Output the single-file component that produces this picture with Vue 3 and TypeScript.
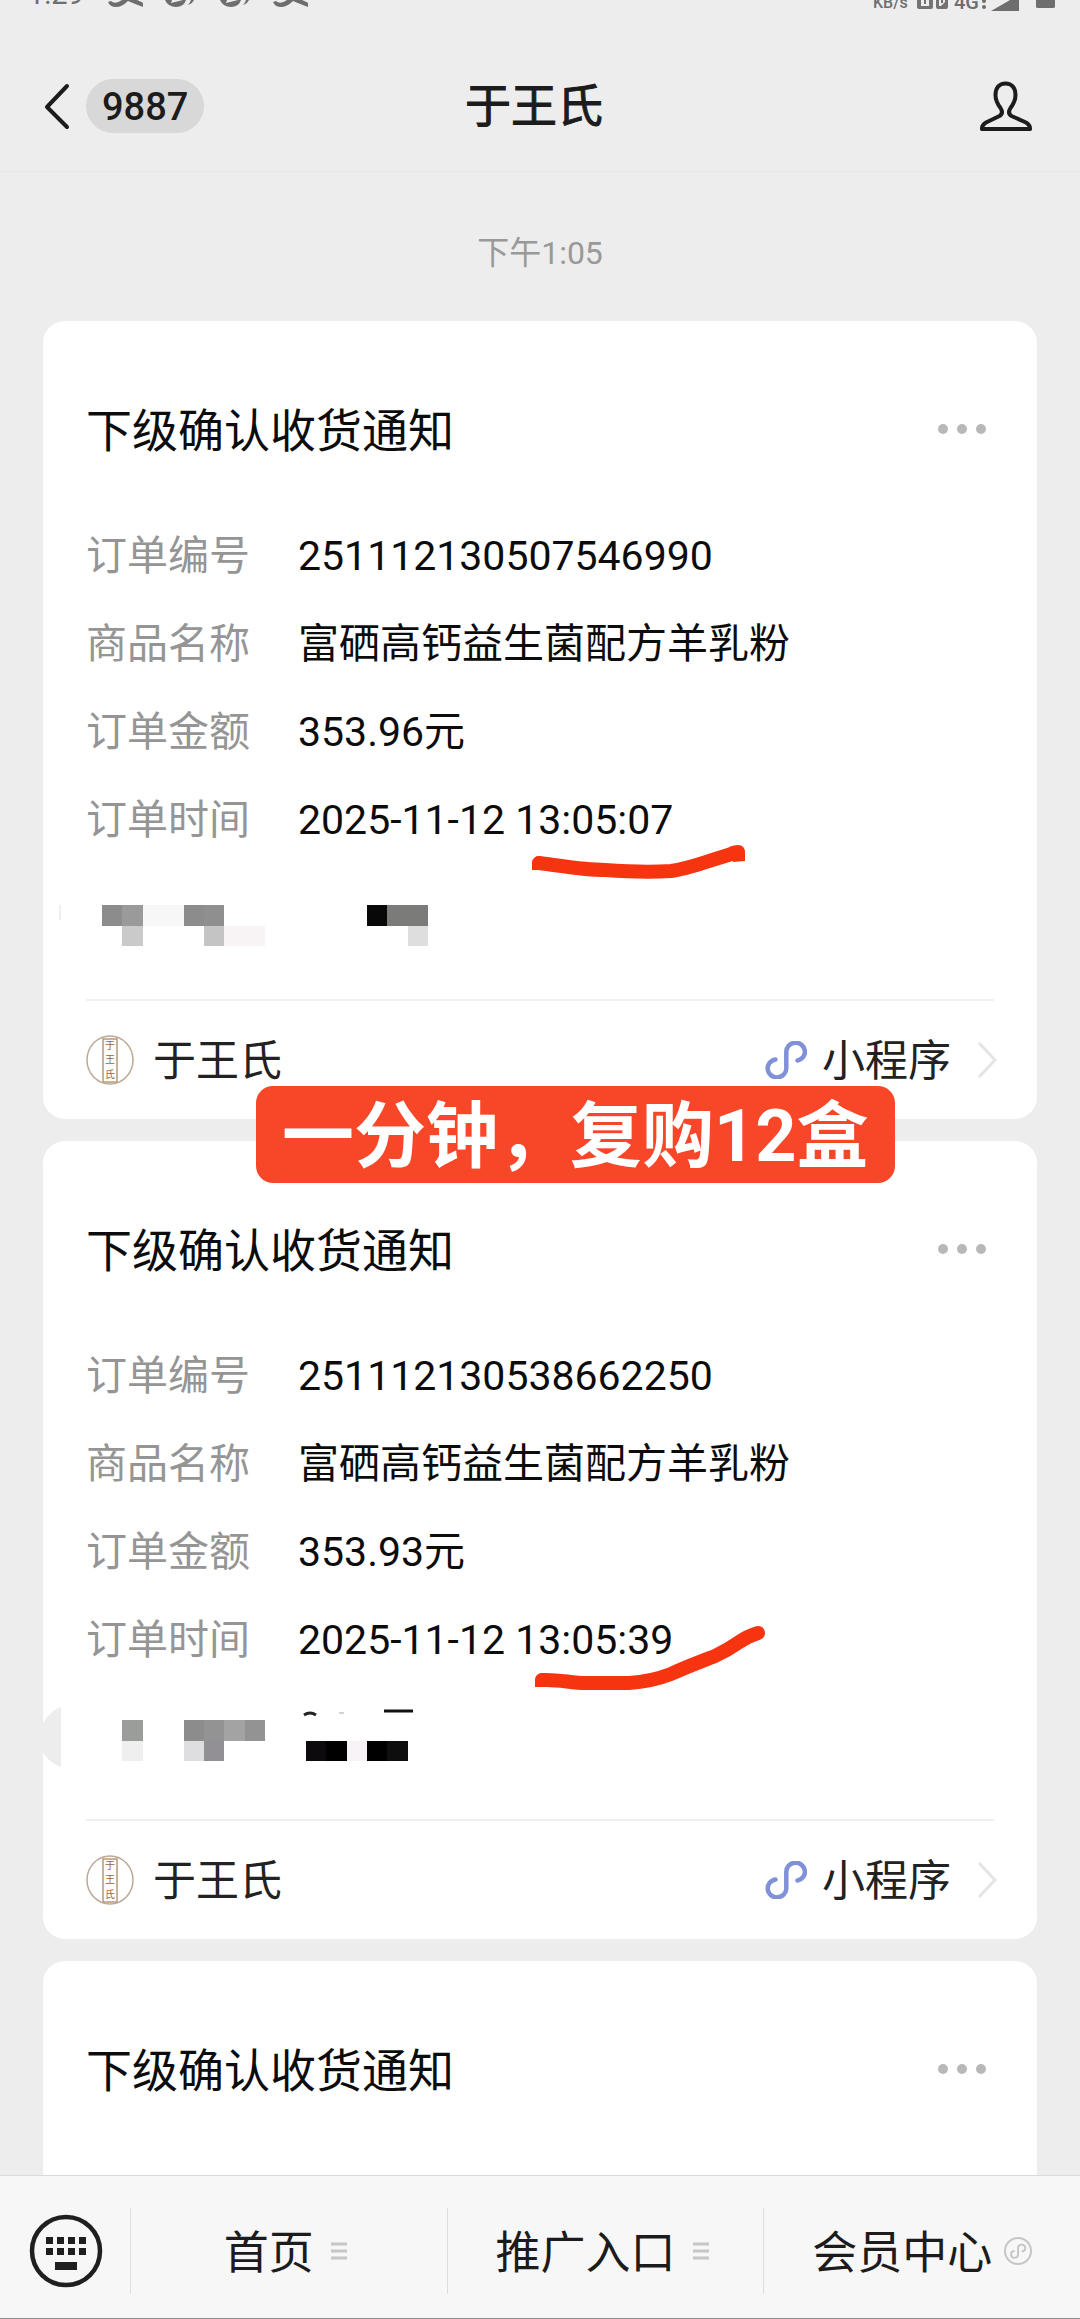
<script setup lang="ts">
interface Field {
  label: string
  value: string
}
interface Cell {
  col: number
  row: number
  span: number
  fill: string
}
interface Notice {
  title: string
  fields: Field[]
  cells: Cell[]
  mosaicTop: number
  stroke: string
  cap: string
  remnant: boolean
}

const product = '富硒高钙益生菌配方羊乳粉'

const notices: Notice[] = [
  {
    title: '下级确认收货通知',
    fields: [
      { label: '订单编号', value: '251112130507546990' },
      { label: '商品名称', value: product },
      { label: '订单金额', value: '353.96元' },
      { label: '订单时间', value: '2025-11-12 13:05:07' },
    ],
    cells: [
      { col: 0, row: 0, span: 1, fill: '#8c8c8c' },
      { col: 1, row: 0, span: 1, fill: '#9a9a9a' },
      { col: 2, row: 0, span: 2, fill: '#f7f7f7' },
      { col: 4, row: 0, span: 1, fill: '#8c8c8c' },
      { col: 5, row: 0, span: 1, fill: '#8f8f8f' },
      { col: 1, row: 1, span: 1, fill: '#cacaca' },
      { col: 5, row: 1, span: 1, fill: '#c4c4c4' },
      { col: 6, row: 1, span: 2, fill: '#f8f4f6' },
      { col: 13, row: 0, span: 1, fill: '#080808' },
      { col: 14, row: 0, span: 2, fill: '#7b7c7a' },
      { col: 15, row: 1, span: 1, fill: '#dedede' },
    ],
    mosaicTop: 41,
    stroke: 'M496 542 C520 545 540 549 562 549 C590 551 612 551 628 550 C646 548 664 540 692 532',
    cap: 'M489 549 V543 Q490 535 497 535 L506 549 Z M686 526 Q702 520 702 532 V540 L690 541 Z',
    remnant: false,
  },
  {
    title: '下级确认收货通知',
    fields: [
      { label: '订单编号', value: '251112130538662250' },
      { label: '商品名称', value: product },
      { label: '订单金额', value: '353.93元' },
      { label: '订单时间', value: '2025-11-12 13:05:39' },
    ],
    cells: [
      { col: 1, row: 0, span: 1, fill: '#9b9d9b' },
      { col: 4, row: 0, span: 1, fill: '#8c8c8c' },
      { col: 5, row: 0, span: 1, fill: '#939393' },
      { col: 6, row: 0, span: 1, fill: '#a3a3a3' },
      { col: 7, row: 0, span: 1, fill: '#939393' },
      { col: 1, row: 1, span: 1, fill: '#efefef' },
      { col: 4, row: 1, span: 1, fill: '#dedde0' },
      { col: 5, row: 1, span: 1, fill: '#939095' },
      { col: 10, row: 1, span: 1, fill: '#0d0a0d' },
      { col: 11, row: 1, span: 1, fill: '#000000' },
      { col: 12, row: 1, span: 1, fill: '#f7f3f6' },
      { col: 13, row: 1, span: 1, fill: '#000000' },
      { col: 14, row: 1, span: 1, fill: '#0e0e0e' },
    ],
    mosaicTop: 36,
    stroke: 'M499 539 C515 538 528 542 543 542 H586 C602 541 615 538 628 533 C645 525 657 521 672 515 C700 502 695 498 715 492',
    cap: 'M492 546 V540 Q493 532 500 532 L510 546 Z',
    remnant: true,
  },
]

const tabs = [
  { label: '首页', icon: 'menu' },
  { label: '推广入口', icon: 'menu' },
  { label: '会员中心', icon: 'mini' },
]

const miniPath = 'M32.5 19.5 A9.3 9 0 1 0 21.3 11 V27 A9.3 9 0 1 1 10.5 18.5'
</script>

<template>
  <div class="page">
    <header class="top">
      <div class="status">
        <div class="status-row">
          <span class="clock">1:29</span>
          <svg class="notif" width="206" height="12" viewBox="0 0 206 12" fill="#6e6e6e" aria-hidden="true">
            <path d="M0 2 L3 1 Q7 5 14 0 H29 Q34 2 35 3 V7 Q27 4 20 1 Q14 7 8 7 Q2 7 0 2 Z" />
            <path d="M57 0 H64 L63 3 L75 0 H78 Q76 7 68 7 Q60 7 57 0 Z M83 0 H86 Q84 4 80 5 Q82 3 83 0 Z" />
            <path d="M112 0 H119 L118 3 L130 0 H133 Q131 7 123 7 Q115 7 112 0 Z M138 0 H141 Q139 4 135 5 Q137 3 138 0 Z" />
            <path d="M165 2 L168 1 Q172 5 179 0 H194 Q199 2 200 3 V7 Q192 4 185 1 Q179 7 173 7 Q167 7 165 2 Z" />
          </svg>
          <span class="grow"></span>
          <span class="speed">KB/s</span>
          <svg width="33" height="12" viewBox="0 0 33 12" aria-hidden="true">
            <path d="M0 0 H16 V7 Q16 9 14 9 H2 Q0 9 0 7 Z M19 0 H31 V7 Q31 9 29 9 H21 Q19 9 19 7 Z" fill="#737373" />
            <path d="M4 0 H12 V6 H4 Z M22 0 H28 V2 L24 6 H22 Z" fill="#ededed" />
            <path d="M7 0 H9 V4 H7 Z M24 0 H26 V3 H24 Z" fill="#737373" />
          </svg>
          <span class="net">4G</span>
          <svg width="78" height="12" viewBox="0 0 78 12" fill="#6e6e6e" aria-hidden="true">
            <circle cx="6" cy="1" r="2" />
            <circle cx="6" cy="7" r="2" />
            <path d="M13 11 L32 0 H41 V11 Z M58 0 H77 V7 Q77 8 75 8 H60 Q58 8 58 7 Z" />
          </svg>
        </div>
      </div>
      <div class="bar">
        <button class="back" type="button" aria-label="返回">
          <svg width="26" height="48" viewBox="0 0 26 48" fill="none" stroke="#1c1c1c" stroke-width="4" stroke-linecap="round" stroke-linejoin="round">
            <path d="M23 4 L3 25 L23 45" />
          </svg>
          <span class="count">9887</span>
        </button>
        <h1>于王氏</h1>
        <button class="person" type="button" aria-label="资料">
          <svg width="52" height="50" viewBox="0 0 52 50" fill="none" stroke="#1c1c1c" stroke-width="4" stroke-linejoin="round">
            <path d="M25.5 2.5 C19 2.5 15.5 7 15.5 14 C15.5 20 17.5 23 20.500 27 C22.800 30.500 22.500 33 19.500 35 L6 41.500 C2.500 43.500 1.800 45 2 48 H50 C50.200 45 49.500 43.500 46 41.500 L31.500 35 C28.500 33 28.200 30.500 30.500 27 C33.500 23 35.500 20 35.500 14 C35.500 7 32 2.500 25.500 2.500 Z" />
          </svg>
        </button>
      </div>
    </header>

    <main>
      <time>下午1:05</time>
      <div class="feed">
        <article v-for="(n, i) in notices" :key="i" class="card">
          <div class="head">
            <h2>{{ n.title }}</h2>
            <button class="more" type="button" aria-label="更多"><i></i><i></i><i></i></button>
          </div>
          <dl>
            <div v-for="f in n.fields" :key="f.label" class="field">
              <dt>{{ f.label }}</dt>
              <dd>{{ f.value }}</dd>
            </div>
          </dl>
          <svg class="redacted" aria-hidden="true">
            <svg x="16" :y="n.mosaicTop" width="326" height="41" viewBox="0 0 16 2" preserveAspectRatio="none" shape-rendering="crispEdges">
              <rect v-for="(c, k) in n.cells" :key="k" :x="c.col" :y="c.row" :width="c.span" height="1" :fill="c.fill" />
            </svg>
            <template v-if="n.remnant">
              <path d="M-25 23 Q-36 27 -43 39 V69 Q-36 79 -25 83 Z" fill="#ededed" />
              <path d="M218 31 Q224 27 230 31" fill="none" stroke="#222" stroke-width="3" />
              <path d="M253 29 H258" stroke="#d5d5d5" stroke-width="2" />
              <path d="M298 27 H327" stroke="#111" stroke-width="3" />
            </template>
            <path v-else d="M-26 41 V56" stroke="#efefef" stroke-width="2" />
          </svg>
          <a class="foot" href="#">
            <svg class="avatar" width="48" height="50" viewBox="0 0 48 50" aria-hidden="true">
              <ellipse cx="24" cy="25" rx="23" ry="24" fill="none" stroke="#baa997" stroke-width="1.500" />
              <rect x="17" y="4" width="14" height="43" fill="#fffdfa" stroke="#b5987a" stroke-width="1.500" />
              <text x="24" y="14">于</text>
              <text x="24" y="28">王</text>
              <text x="24" y="43">氏</text>
            </svg>
            <span class="name">于王氏</span>
            <span class="grow"></span>
            <svg class="mini" width="42" height="38" viewBox="0 0 42 38" fill="none" stroke="#8091d8" stroke-width="4.500" stroke-linecap="round">
              <path :d="miniPath" />
            </svg>
            <span class="name-mini">小程序</span>
            <svg class="chev" width="20" height="38" viewBox="0 0 20 38" fill="none" stroke="#e4e4e4" stroke-width="3">
              <path d="M2 2 L18 19 L2 36" />
            </svg>
          </a>
          <svg class="ink" aria-hidden="true">
            <path :d="n.stroke" fill="none" stroke="#f63410" stroke-width="14" stroke-linecap="round" />
            <path :d="n.cap" fill="#f63410" />
          </svg>
        </article>
        <article class="card last">
          <div class="head">
            <h2>下级确认收货通知</h2>
            <button class="more" type="button" aria-label="更多"><i></i><i></i><i></i></button>
          </div>
        </article>
        <p class="banner">一分钟，复购12盒</p>
      </div>
    </main>

    <nav>
      <button class="keyboard" type="button" aria-label="键盘">
        <svg width="74" height="74" viewBox="0 0 74 74" fill="#1f1f1f">
          <circle cx="37" cy="37" r="34" fill="none" stroke="#1f1f1f" stroke-width="4.500" />
          <path d="M17 23h7v7h-7z M28 23h7v7h-7z M39 23h7v7h-7z M50 23h7v7h-7z M17 34h7v7h-7z M28 34h7v7h-7z M39 34h7v7h-7z M50 34h7v7h-7z M26 48h22v8h-22z" />
        </svg>
      </button>
      <button v-for="t in tabs" :key="t.label" class="tab" type="button">
        <span>{{ t.label }}</span>
        <svg v-if="t.icon === 'menu'" width="28" height="28" viewBox="0 0 28 28" stroke="#c6c6c6" stroke-width="3">
          <path d="M5 7 H21 M5 14 H21 M5 21 H21" />
        </svg>
        <svg v-else width="28" height="28" viewBox="0 0 28 28" fill="none" stroke="#c6c6c6">
          <circle cx="14" cy="14" r="13" stroke-width="2" />
          <path transform="translate(6 7) scale(0.380)" :d="miniPath" stroke-width="5" stroke-linecap="round" />
        </svg>
      </button>
    </nav>
  </div>
</template>

<style>
body {
  margin: 0;
  background: #ededed;
}
</style>

<style scoped>
.page {
  display: flex;
  flex-direction: column;
  height: 100vh;
  overflow: hidden;
  background: #ededed;
  color: #1c1c1c;
  font-family: Roboto, "Noto Sans CJK SC", sans-serif;
}
h1, h2, p, dl, dd {
  margin: 0;
  font-weight: 400;
}
button {
  border: 0;
  padding: 0;
  background: none;
  color: inherit;
  font: inherit;
}
svg {
  display: block;
  flex: none;
}
.grow {
  flex: 1;
}
.top {
  flex: none;
  border-bottom: 1px solid #e8e8e8;
}
.status {
  height: 40px;
}
.status-row {
  display: flex;
  align-items: flex-end;
  height: 12px;
  padding: 0 24px 0 28px;
  color: #6e6e6e;
}
.clock {
  width: 80px;
  padding-bottom: 3px;
  font-size: 29px;
  line-height: 29px;
}
.speed {
  width: 44px;
  padding-bottom: 1px;
  font-size: 16px;
  line-height: 16px;
  font-weight: 500;
}
.net {
  width: 24px;
  margin-left: 4px;
  font-size: 20px;
  line-height: 20px;
  font-weight: 500;
}
.bar {
  display: grid;
  grid-template-columns: 1fr auto 1fr;
  align-items: center;
  height: 131px;
  padding: 0 48px 0 36px;
}
.back {
  display: flex;
  align-items: center;
  gap: 16px;
  justify-self: start;
  padding-left: 8px;
}
.count {
  padding: 2px 16px 0;
  border-radius: 27px;
  background: #d8d8d8;
  font-size: 38px;
  line-height: 52px;
  font-weight: 500;
}
h1 {
  font-size: 46px;
  line-height: 60px;
  -webkit-text-stroke: 1px currentColor;
}
.person {
  justify-self: end;
}
main {
  flex: 1;
  min-height: 0;
  overflow: hidden;
  display: flex;
  flex-direction: column;
}
time {
  padding: 57px 0 44px;
  color: #999;
  font-size: 32px;
  line-height: 48px;
  text-align: center;
}
.feed {
  position: relative;
  flex: 1;
  display: flex;
  flex-direction: column;
  gap: 22px;
  padding: 0 43px;
}
.card {
  position: relative;
  padding: 78px 43px 0;
  border-radius: 22px;
  background: #fff;
}
.last {
  flex: 1;
  border-radius: 22px 22px 0 0;
}
.head {
  display: flex;
  align-items: center;
  justify-content: space-between;
  height: 60px;
}
h2 {
  padding-top: 4px;
  color: #0c0c0c;
  font-size: 46px;
  line-height: 60px;
}
.more {
  display: flex;
  gap: 9px;
  padding: 8px;
}
.more i {
  width: 10px;
  height: 10px;
  border-radius: 5px;
  background: #b8b8b8;
}
dl {
  padding-top: 53px;
}
.field {
  display: flex;
  gap: 48px;
  font-size: 41px;
  line-height: 88px;
}
dt {
  color: #959595;
}
dd {
  color: #0c0c0c;
}
.redacted {
  width: 100%;
  height: 88px;
  margin-bottom: 47px;
  overflow: visible;
}
.foot {
  display: flex;
  align-items: center;
  height: 118px;
  border-top: 2px solid #f0f0f0;
  color: #222;
  font-size: 43px;
  line-height: 60px;
  text-decoration: none;
}
.avatar text {
  fill: #94683c;
  font-size: 10px;
  text-anchor: middle;
}
.name {
  padding-top: 2px;
  margin-left: 19px;
}
.name-mini {
  padding-top: 2px;
}
.mini {
  margin-right: 15px;
}
.chev {
  margin: 0 -3px 0 26px;
}
.ink {
  position: absolute;
  top: 0;
  left: 0;
  width: 100%;
  height: 100%;
  pointer-events: none;
}
.banner {
  position: absolute;
  top: 765px;
  left: 256px;
  padding: 4px 26px 0;
  border-radius: 17px;
  background: #f74728;
  color: #fff;
  font-size: 72px;
  line-height: 93px;
  font-weight: 700;
  white-space: nowrap;
}
nav {
  flex: none;
  display: flex;
  padding: 32px 0 24px;
  border-top: 1px solid #dadada;
  border-bottom: 1px solid #8c8c8c;
  background: #f7f7f7;
}
.keyboard {
  display: flex;
  align-items: center;
  padding: 0 27px 0 29px;
}
.tab {
  flex: 1;
  display: flex;
  align-items: center;
  justify-content: center;
  gap: 12px;
  height: 86px;
  border-left: 1px solid #dedede;
  font-size: 45px;
  line-height: 60px;
}
.tab span {
  padding-top: 5px;
}
</style>
